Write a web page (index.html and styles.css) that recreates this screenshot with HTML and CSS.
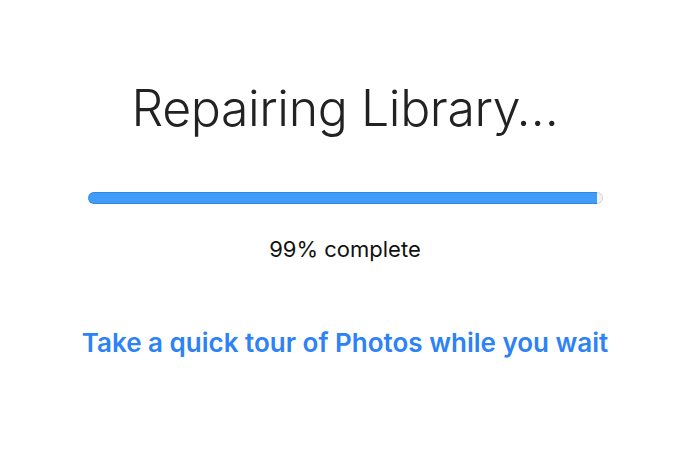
FILE: index.html
```html
<!DOCTYPE html>
<html>
<head>
<meta charset="utf-8">
<link rel="stylesheet" href="styles.css">
</head>
<body>
<main class="panel">
  <h1 class="title">Repairing Library…</h1>
  <div class="track"><div class="fill" style="width:99%"></div></div>
  <p class="status">99% complete</p>
  <a class="tour" href="#">Take a quick tour of Photos while you wait</a>
</main>
</body>
</html>
```
FILE: styles.css
```css
html, body {
  margin: 0;
  padding: 0;
  background: #ffffff;
}
body {
  width: 700px;
  height: 468px;
  font-family: Inter, "Noto Sans", sans-serif;
}
.panel {
  display: flex;
  flex-direction: column;
  align-items: center;
  padding-top: 74px;
  padding-right: 10px;
}
.title {
  margin: 0;
  font-size: 50px;
  font-weight: 300;
  color: #222222;
  line-height: 68px;
  letter-spacing: -0.4px;
}
.track {
  margin-top: 50px;
  width: 515px;
  height: 12px;
  border-radius: 6px;
  background: #f2f2f2;
  box-shadow: inset 0 0 0 1px #d8d8d8;
  overflow: hidden;
}
.fill {
  height: 100%;
  background: #419bf9;
  border-radius: 6px 0 0 6px;
  box-shadow: inset 0 1px 0 #2f86e4, inset 0 -1px 0 #2f86e4;
}
.status {
  margin: 32px 0 0;
  font-size: 22px;
  color: #111111;
  line-height: 26px;
}
.tour {
  margin-top: 66px;
  font-size: 26px;
  font-weight: 600;
  color: #2c82f6;
  text-decoration: none;
  line-height: 30px;
}
```
